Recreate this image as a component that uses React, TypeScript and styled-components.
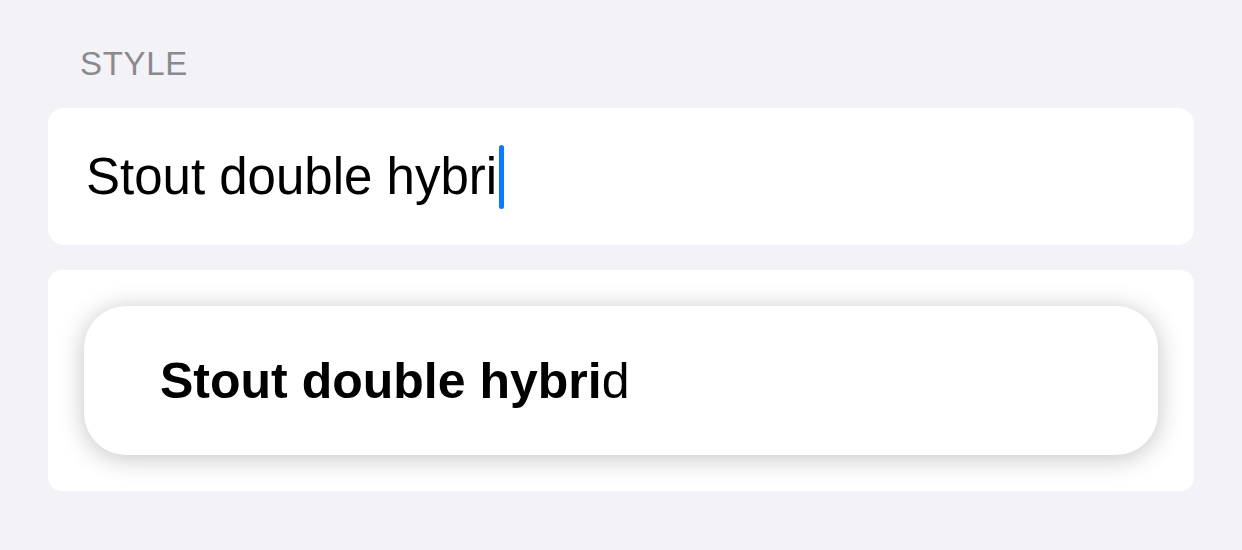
import React from "react";
import styled, { createGlobalStyle } from "styled-components";

const GlobalStyle = createGlobalStyle`
  html, body {
    margin: 0;
    padding: 0;
    background: #f2f2f7;
    font-family: "Liberation Sans", Arial, sans-serif;
  }
`;

export default function App() {
  const typed = "Stout double hybri";
  const suggestion = "Stout double hybrid";

  return (
    <Page>
      <GlobalStyle />
      <SectionLabel>STYLE</SectionLabel>
      <InputCard>
        <InputText>{typed}</InputText>
        <Caret />
      </InputCard>
      <SuggestionCard>
        <SuggestionPill>
          <SuggestionText>
            <Match>{typed}</Match>
            {suggestion.slice(typed.length)}
          </SuggestionText>
        </SuggestionPill>
      </SuggestionCard>
    </Page>
  );
}

const Page = styled.div`
  width: 1242px;
  height: 550px;
  box-sizing: border-box;
  padding: 47px 48px 0;
  display: flex;
  flex-direction: column;
`;

const SectionLabel = styled.div`
  font-size: 33px;
  line-height: 33px;
  color: #8a8a8e;
  padding-left: 32px;
  letter-spacing: 0.7px;
  margin-bottom: 28px;
`;

const InputCard = styled.div`
  height: 137px;
  background: #ffffff;
  border-radius: 16px;
  display: flex;
  align-items: center;
  padding-left: 38px;
`;

const InputText = styled.span`
  font-size: 51px;
  line-height: 51px;
  color: #000000;
`;

const Caret = styled.span`
  width: 5px;
  height: 64px;
  margin-left: 2px;
  border-radius: 3px;
  background: #0a7aff;
`;

const SuggestionCard = styled.div`
  margin-top: 25px;
  height: 221px;
  box-sizing: border-box;
  padding: 36px;
  background: #ffffff;
  border-radius: 14px;
`;

const SuggestionPill = styled.div`
  height: 149px;
  background: #ffffff;
  border-radius: 42px;
  box-shadow: 0 3px 26px rgba(0, 0, 0, 0.24);
  display: flex;
  align-items: center;
  padding-left: 76px;
`;

const SuggestionText = styled.span`
  font-size: 50px;
  line-height: 50px;
  color: #000000;
`;

const Match = styled.span`
  font-weight: 700;
`;
